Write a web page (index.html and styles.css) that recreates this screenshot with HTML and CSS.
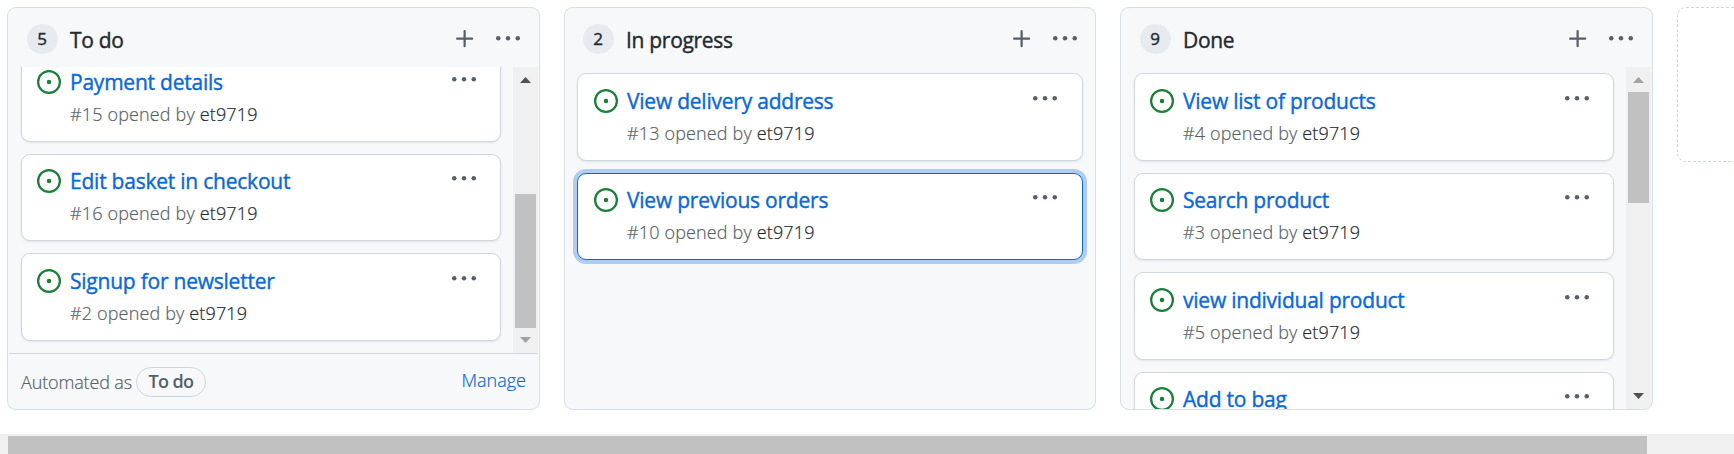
FILE: index.html
```
<!DOCTYPE html>
<html lang="en">
<head>
<meta charset="utf-8">
<title>Project board</title>
<link rel="stylesheet" href="styles.css">
</head>
<body>
<svg class="sprite" aria-hidden="true">
  <symbol id="plus" viewBox="0 0 16 16"><path d="M7.75 2a.75.75 0 01.75.75V7h4.25a.75.75 0 110 1.5H8.5v4.25a.75.75 0 11-1.5 0V8.5H2.75a.75.75 0 010-1.5H7V2.75A.75.75 0 017.75 2z"/></symbol>
  <symbol id="kebab" viewBox="0 0 16 16"><circle cx="1.5" cy="7.5" r="1.5"/><circle cx="8" cy="7.5" r="1.5"/><circle cx="14.5" cy="7.5" r="1.5"/></symbol>
  <symbol id="issue" viewBox="0 0 16 16"><circle cx="8" cy="8" r="1.5"/><path fill-rule="evenodd" d="M8 0a8 8 0 100 16A8 8 0 008 0zM1.5 8a6.5 6.5 0 1113 0 6.5 6.5 0 01-13 0z"/></symbol>
</svg>
<main class="board">
  <section class="column">
    <header class="column-header"><span class="count">5</span><h3 class="name">To do</h3><svg class="icon plus"><use href="#plus"/></svg><svg class="icon"><use href="#kebab"/></svg></header>
    <div class="viewport">
      <div class="cards scrolled">
        <article class="card"><svg class="issue"><use href="#issue"/></svg><div class="body"><a class="title">Payment details</a><p class="meta">#15 opened by <b>et9719</b></p></div><svg class="icon menu"><use href="#kebab"/></svg></article>
        <article class="card"><svg class="issue"><use href="#issue"/></svg><div class="body"><a class="title">Edit basket in checkout</a><p class="meta">#16 opened by <b>et9719</b></p></div><svg class="icon menu"><use href="#kebab"/></svg></article>
        <article class="card"><svg class="issue"><use href="#issue"/></svg><div class="body"><a class="title">Signup for newsletter</a><p class="meta">#2 opened by <b>et9719</b></p></div><svg class="icon menu"><use href="#kebab"/></svg></article>
      </div>
      <div class="scrollbar"><i class="arrow up"></i><i class="thumb thumb-low"></i><i class="arrow down off"></i></div>
    </div>
    <footer class="column-footer"><span class="auto">Automated as</span><span class="pill">To do</span><a class="manage">Manage</a></footer>
  </section>
  <section class="column wide">
    <header class="column-header"><span class="count">2</span><h3 class="name">In progress</h3><svg class="icon plus"><use href="#plus"/></svg><svg class="icon"><use href="#kebab"/></svg></header>
    <div class="viewport">
      <div class="cards">
        <article class="card"><svg class="issue"><use href="#issue"/></svg><div class="body"><a class="title">View delivery address</a><p class="meta">#13 opened by <b>et9719</b></p></div><svg class="icon menu"><use href="#kebab"/></svg></article>
        <article class="card focused"><svg class="issue"><use href="#issue"/></svg><div class="body"><a class="title">View previous orders</a><p class="meta">#10 opened by <b>et9719</b></p></div><svg class="icon menu"><use href="#kebab"/></svg></article>
      </div>
    </div>
  </section>
  <section class="column">
    <header class="column-header"><span class="count">9</span><h3 class="name">Done</h3><svg class="icon plus"><use href="#plus"/></svg><svg class="icon"><use href="#kebab"/></svg></header>
    <div class="viewport">
      <div class="cards">
        <article class="card"><svg class="issue"><use href="#issue"/></svg><div class="body"><a class="title">View list of products</a><p class="meta">#4 opened by <b>et9719</b></p></div><svg class="icon menu"><use href="#kebab"/></svg></article>
        <article class="card"><svg class="issue"><use href="#issue"/></svg><div class="body"><a class="title">Search product</a><p class="meta">#3 opened by <b>et9719</b></p></div><svg class="icon menu"><use href="#kebab"/></svg></article>
        <article class="card"><svg class="issue"><use href="#issue"/></svg><div class="body"><a class="title">view individual product</a><p class="meta">#5 opened by <b>et9719</b></p></div><svg class="icon menu"><use href="#kebab"/></svg></article>
        <article class="card"><svg class="issue"><use href="#issue"/></svg><div class="body"><a class="title">Add to bag</a></div><svg class="icon menu"><use href="#kebab"/></svg></article>
      </div>
      <div class="scrollbar"><i class="arrow up off"></i><i class="thumb thumb-top"></i><i class="arrow down"></i></div>
    </div>
  </section>
  <div class="new-column"></div>
</main>
<div class="page-scroll"><div class="page-thumb"></div></div>
</body>
</html>
```
FILE: styles.css
```
* { box-sizing: border-box; }
html, body { height: 100%; }
body {
  margin: 0;
  overflow: hidden;
  display: flex;
  flex-direction: column;
  background: #fff;
  color: #24292f;
  font-family: "Open Sans", "Noto Sans", sans-serif;
}
.sprite { display: none; }
.board {
  height: 434px;
  flex: none;
  display: flex;
  gap: 24px;
  padding: 7px 0 24px 7px;
  overflow: hidden;
}
.column {
  width: 533px;
  flex: none;
  display: flex;
  flex-direction: column;
  border: 1px solid #d8dee4;
  border-radius: 9px;
  background: #f6f8fa;
  overflow: hidden;
}
.column.wide { width: 532px; }
.column-header {
  height: 59px;
  flex: none;
  display: flex;
  align-items: flex-start;
  padding: 16px 19px 0 19px;
}
.wide .column-header { padding: 16px 18px 0; }
.count {
  width: 31px;
  height: 30px;
  border-radius: 15px;
  background: #e7ebf0;
  font-size: 17px;
  -webkit-text-stroke: 0.4px currentColor;
  line-height: 30px;
  padding-right: 1px;
  text-align: center;
}
.name {
  flex: 1;
  margin: 1px 0 0 12px;
  font-size: 21px;
  font-weight: 400;
  -webkit-text-stroke: 0.4px currentColor;
  line-height: 30px;
  letter-spacing: -0.3px;
}
.icon { width: 24px; height: 24px; flex: none; fill: #57606a; }
.column-header .icon { margin-top: 3px; }
.column-header .plus { margin-right: 19px; }
.viewport { flex: 1; min-height: 0; display: flex; overflow: hidden; padding-right: 1px; }
.cards {
  flex: 1;
  display: flex;
  flex-direction: column;
  gap: 12px;
  margin: 6.4px 12px 0 13px;
}
.cards.scrolled { margin-top: -12.6px; }
.wide .cards { margin: 6.4px 11px 0 12px; }
.card {
  height: 87.5px;
  flex: none;
  display: flex;
  align-items: flex-start;
  padding: 0 24px 0 15px;
  border: 1px solid #d0d7de;
  border-radius: 9px;
  background: #fff;
  box-shadow: 0 1px 2px rgba(140, 149, 159, 0.2);
}
.wide .card { padding: 0 25px 0 16px; }
.card.focused { border-color: #0969da; box-shadow: 0 0 0 4px #afcdf1; }
.issue { width: 24px; height: 24px; flex: none; margin-top: 14.3px; fill: #1a7f37; }
.body { flex: 1; padding: 11.5px 0 0 9px; }
.title {
  display: block;
  color: #0969da;
  font-size: 21px;
  -webkit-text-stroke: 0.4px currentColor;
  line-height: 30px;
  letter-spacing: -0.23px;
  white-space: nowrap;
}
.meta {
  margin: 4px 0 0;
  color: #57606a;
  font-size: 18px;
  font-weight: 300;
  -webkit-text-stroke: 0.2px currentColor;
  line-height: 27px;
  letter-spacing: 0.15px;
  white-space: nowrap;
}
.meta b { color: #24292f; font-weight: 300; }
.menu { margin-top: 12.3px; }
.scrollbar {
  width: 25px;
  flex: none;
  display: flex;
  flex-direction: column;
  background: #f0f0f0;
}
.arrow { width: 11px; height: 6px; flex: none; background: #505050; margin: 10px 7px 9px; }
.arrow.up { clip-path: polygon(50% 0, 100% 100%, 0 100%); }
.arrow.down { clip-path: polygon(0 0, 100% 0, 50% 100%); margin: auto 7px 10px; }
.arrow.off { background: #a3a3a3; }
.thumb { width: 21px; flex: none; margin-left: 2px; background: #c1c1c1; }
.thumb-low { height: 134px; margin-top: 102px; }
.thumb-top { height: 111px; }
.column-footer {
  height: 56px;
  flex: none;
  display: flex;
  align-items: flex-start;
  margin: 0 1px;
  padding: 13px 12px 0;
  border-top: 1px solid #d0d7de;
  color: #57606a;
  font-size: 18px;
  line-height: 27px;
}
.auto {
  width: 115px;
  margin-top: 2px;
  font-weight: 300;
  -webkit-text-stroke: 0.2px currentColor;
  white-space: nowrap;
  letter-spacing: -0.15px;
}
.pill {
  width: 70px;
  height: 30px;
  border: 1px solid #d0d7de;
  border-radius: 15px;
  font-weight: 600;
  text-align: center;
  letter-spacing: -0.6px;
}
.manage { margin-left: auto; color: #0969da; font-weight: 300; -webkit-text-stroke: 0.2px currentColor; }
.new-column {
  width: 533px;
  height: 155px;
  flex: none;
  border: 1px dashed #d0d7de;
  border-radius: 9px;
}
.page-scroll { flex: 1; background: #f0f0f0; padding: 2px 0 0 8px; }
.page-thumb { width: 1639px; height: 100%; background: #c1c1c1; }
```
